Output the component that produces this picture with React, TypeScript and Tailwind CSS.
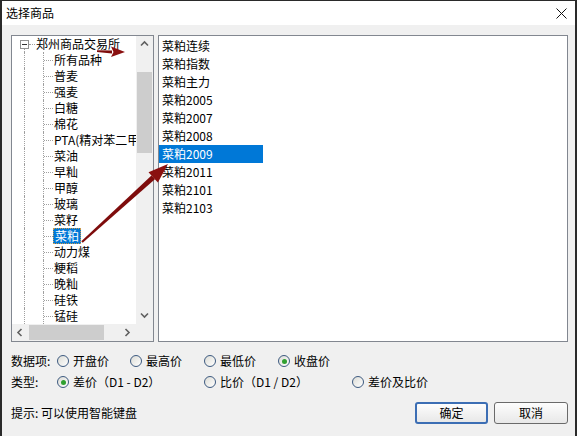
const font = "font-['Noto_Sans_CJK_SC','Microsoft_YaHei',sans-serif]";

const treeChildren = [
  '所有品种',
  '普麦',
  '强麦',
  '白糖',
  '棉花',
  'PTA(精对苯二甲酸)',
  '菜油',
  '早籼',
  '甲醇',
  '玻璃',
  '菜籽',
  '菜粕',
  '动力煤',
  '粳稻',
  '晚籼',
  '硅铁',
  '锰硅',
];

const listItems = ['菜粕连续', '菜粕指数', '菜粕主力', '菜粕2005', '菜粕2007', '菜粕2008', '菜粕2009', '菜粕2011', '菜粕2101', '菜粕2103'];

const Chevron = ({ dir }: { dir: 'up' | 'down' | 'left' | 'right' }) => {
  const d = {
    up: 'M1 5.5 L4.5 2 L8 5.5',
    down: 'M1 2.5 L4.5 6 L8 2.5',
    left: 'M5.5 1 L2 4.5 L5.5 8',
    right: 'M2.5 1 L6 4.5 L2.5 8',
  }[dir];
  return (
    <svg width="9" height="9" viewBox="0 0 9 9">
      <path d={d} fill="none" stroke="#606060" strokeWidth="1.6" />
    </svg>
  );
};

const Radio = ({ checked }: { checked?: boolean }) => (
  <div className="w-[12px] h-[12px] shrink-0 rounded-full border border-[#3d5a80] bg-linear-to-br from-[#dcdcd6] to-white flex items-center justify-center">
    {checked && <div className="w-[5px] h-[5px] rounded-full bg-[#30a030]" />}
  </div>
);

const Option = ({ label, checked, w }: { label: string; checked?: boolean; w: string }) => (
  <div className={`flex items-center gap-[4px] shrink-0 ${w}`}>
    <Radio checked={checked} />
    <span className="whitespace-nowrap">{label}</span>
  </div>
);

const TreePane = () => (
  <div className="w-[143px] h-[307px] border border-[#828790] bg-white grid grid-cols-[1fr_17px] grid-rows-[1fr_17px] shrink-0">
    <div className="overflow-hidden">
      {/* root node */}
      <div className="flex h-[16px]">
        <div className="w-[8px] shrink-0" />
        <div className="w-[9px] shrink-0 flex flex-col pt-[4px]">
          <div className="w-[9px] h-[9px] border border-[#919191] bg-white flex items-center justify-center">
            <div className="w-[5px] h-px bg-[#333333]" />
          </div>
          <div className="flex-1 ml-[4px] border-l border-dotted border-[#a0a0a0]" />
        </div>
        <div className="w-[6px] shrink-0 flex items-center">
          <div className="w-full border-t border-dotted border-[#a0a0a0]" />
        </div>
        <span className="px-px leading-[16px] whitespace-nowrap">郑州商品交易所</span>
      </div>
      {treeChildren.map((name) => (
        <div key={name} className="flex h-[16px]">
          <div className="w-[12px] shrink-0" />
          <div className="w-[19px] shrink-0 border-l border-dotted border-[#a0a0a0]" />
          <div className="w-[10px] shrink-0 border-l border-dotted border-[#a0a0a0] flex items-center">
            <div className="w-[9px] border-t border-dotted border-[#a0a0a0]" />
          </div>
          {name === '菜粕' ? (
            <span className="px-px leading-[14px] h-[16px] whitespace-nowrap bg-[#0078d7] text-white border border-dotted border-[#c89a50]">
              {name}
            </span>
          ) : (
            <span className="px-px leading-[16px] whitespace-nowrap">{name}</span>
          )}
        </div>
      ))}
    </div>

    {/* vertical scrollbar */}
    <div className="bg-[#f0f0f0] flex flex-col">
      <div className="h-[17px] flex items-center justify-center">
        <Chevron dir="up" />
      </div>
      <div className="flex-1 flex flex-col px-px">
        <div className="mt-[19px] h-[81px] bg-[#cdcdcd]" />
      </div>
      <div className="h-[17px] flex items-center justify-center">
        <Chevron dir="down" />
      </div>
    </div>

    {/* horizontal scrollbar */}
    <div className="bg-[#f0f0f0] flex">
      <div className="w-[17px] flex items-center justify-center">
        <Chevron dir="left" />
      </div>
      <div className="flex-1 flex py-px">
        <div className="w-[75px] bg-[#cdcdcd]" />
      </div>
      <div className="w-[17px] flex items-center justify-center">
        <Chevron dir="right" />
      </div>
    </div>
    <div className="bg-[#f0f0f0]" />
  </div>
);

const ListPane = () => (
  <div className="flex-1 h-[307px] border border-[#828790] bg-white pt-px">
    {listItems.map((item) => (
      <div
        key={item}
        className={`w-[104px] h-[18px] leading-[18px] pl-[3px] whitespace-nowrap ${
          item === '菜粕2009' ? 'bg-[#0078d7] text-white' : ''
        }`}
      >
        {item}
      </div>
    ))}
  </div>
);

export default function App() {
  return (
    <div className={`relative w-[577px] h-[436px] overflow-hidden bg-[#f0f0f0] border-t border-x-2 border-[#2a2a2a] text-[12px] text-black ${font}`}>
      {/* Title bar */}
      <div className="h-[24px] bg-white flex items-center justify-between pl-[4px] pr-[8px]">
        <span className="leading-none">选择商品</span>
        <svg width="11" height="11" viewBox="0 0 11 11">
          <path d="M0.5 0.5 L10.5 10.5 M10.5 0.5 L0.5 10.5" stroke="#111111" strokeWidth="1" />
        </svg>
      </div>

      <div className="pl-[9px] pr-[7px]">
        <div className="flex gap-[4px] mt-[10px]">
          <TreePane />
          <ListPane />
        </div>

        <div className="flex items-center h-[20px] mt-[9px]">
          <span className="w-[46px] shrink-0">数据项:</span>
          <Option label="开盘价" w="w-[73px]" />
          <Option label="最高价" w="w-[74px]" />
          <Option label="最低价" w="w-[74px]" />
          <Option label="收盘价" checked w="w-[74px]" />
        </div>

        <div className="flex items-center h-[20px] mt-px">
          <span className="w-[46px] shrink-0">类型:</span>
          <Option label="差价（D1 - D2）" checked w="w-[147px]" />
          <Option label="比价（D1 / D2）" w="w-[148px]" />
          <Option label="差价及比价" w="w-[100px]" />
        </div>

        <div className="flex items-center justify-between h-[22px] mt-[10px]">
          <span>提示: 可以使用智能键盘</span>
          <div className="flex gap-[6px]">
            <button className="w-[73px] h-[22px] rounded-[3px] border-2 border-[#3c6eb4] bg-linear-to-b from-[#fdfdfd] to-[#e8e8e8] leading-none">
              确定
            </button>
            <button className="w-[74px] h-[22px] rounded-[3px] border border-[#6a6a6a] bg-linear-to-b from-[#fdfdfd] to-[#e8e8e8] leading-none">
              取消
            </button>
          </div>
        </div>
      </div>

      {/* annotation arrows */}
      <svg className="absolute inset-0 pointer-events-none" width="577" height="436" viewBox="-2 -1 577 436">
        <polygon points="93,48.3 108,48.6 108,51.4 93,50.1" fill="#7e0c0c" />
        <polygon points="107,44.5 121,50 107,55 109.5,50" fill="#8a1010" />
        <polygon points="77.3,239.3 78.7,240.7 150.9,177.3 147.5,173.5" fill="#7e0c0c" />
        <polygon points="164,162 153.9,180.6 149.2,175.4 144.5,170.2" fill="#8a1010" />
      </svg>
    </div>
  );
}
